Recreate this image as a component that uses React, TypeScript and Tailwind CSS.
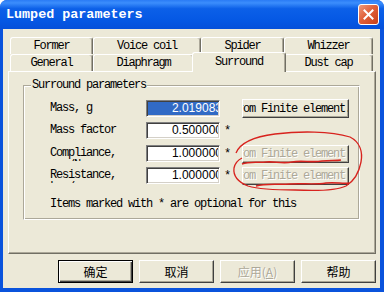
import React from "react";

const MONO = "[font-family:'Liberation_Mono',monospace] text-[12px] tracking-[-1.2px]";
const CJK = "[font-family:'Noto_Sans_CJK_SC','Liberation_Sans',sans-serif] text-[12px]";

function Tab({ label, w, selected }: { label: string; w: string; selected?: boolean }) {
  if (selected) {
    return (
      <div
        className={`${w} relative z-10 -mx-[2px] -mt-[2px] h-[20px] flex items-center justify-center pb-[2px] border-l border-t border-r border-l-white border-t-white border-r-[#716F64] rounded-t-[3px] shadow-[inset_-1px_0_#ACA899] bg-[#ECE9D8] ${MONO}`}
      >
        {label}
      </div>
    );
  }
  return (
    <div
      className={`${w} h-[17px] flex items-center justify-center border-l border-t border-r border-l-white border-t-white border-r-[#716F64] rounded-t-[3px] shadow-[inset_-1px_0_#ACA899] bg-[#ECE9D8] ${MONO}`}
    >
      {label}
    </div>
  );
}

function Row({
  label,
  value,
  selected,
  star,
  button,
  disabled,
  mb,
}: {
  label: string;
  value: string;
  selected?: boolean;
  star?: boolean;
  button?: boolean;
  disabled?: boolean;
  mb: string;
}) {
  return (
    <div className={`flex h-[17px] items-center ${mb}`}>
      <div className={`w-[96px] h-[16px] self-start overflow-hidden pt-[2px] leading-[12px] whitespace-pre ${MONO}`}>{label}</div>
      <div className="w-[74px] h-[17px] border border-t-[#808080] border-l-[#808080] border-r-white border-b-white shadow-[inset_1px_1px_#404040,inset_-1px_-1px_#D4D0C8] bg-white p-[1px]">
        <div
          className={`w-full h-full overflow-hidden flex justify-end items-center ${
            selected ? "bg-[#316AC5] text-white" : "text-black"
          }`}
        >
          <span className="[font-family:'Liberation_Sans',sans-serif] text-[12px] leading-[13px] whitespace-nowrap -mr-[4px]">
            {value}
          </span>
        </div>
      </div>
      <div className={`w-[22px] pl-[4px] leading-[12px] ${MONO}`}>{star ? "*" : ""}</div>
      {button && (
        <div
          className={`w-[107px] ${
            disabled ? "h-[18px]" : "h-[19px]"
          } flex items-center justify-start overflow-hidden whitespace-nowrap border border-t-white border-l-white border-r-[#404040] border-b-[#404040] shadow-[inset_-1px_-1px_#A8A595] bg-[#ECE9D8] ${MONO} ${
            disabled ? "text-[#ACA899] [text-shadow:1px_1px_0_#fff]" : "text-black"
          }`}
        >
          <span className="-ml-[12px]">From Finite element..</span>
        </div>
      )}
    </div>
  );
}

function DlgButton({ children, def, disabled }: { children: React.ReactNode; def?: boolean; disabled?: boolean }) {
  return (
    <div
      className={`w-[75px] h-[23px] flex items-center justify-center bg-[#ECE9D8] ${CJK} ${
        def
          ? "border border-black shadow-[inset_1px_1px_#fff,inset_-1px_-1px_#404040,inset_-2px_-2px_#A8A595]"
          : "border border-t-white border-l-white border-r-[#404040] border-b-[#404040] shadow-[inset_-1px_-1px_#A8A595]"
      } ${disabled ? "text-[#ACA899] [text-shadow:1px_1px_0_#fff]" : "text-black"}`}
    >
      {children}
    </div>
  );
}

export default function App() {
  return (
    <div className="relative w-[384px] h-[292px] bg-white">
      <div className="w-[384px] h-[292px] flex flex-col bg-[#0A53DC] rounded-t-[7px] overflow-hidden">
        {/* title bar */}
        <div className="h-[29px] flex items-center justify-between pl-[6px] pr-[5px] bg-[linear-gradient(180deg,#2A7BF5_0%,#3C8EFC_10%,#0C60E8_30%,#0558E4_70%,#0550DA_100%)]">
          <span className="[font-family:'Liberation_Mono',monospace] font-bold text-[13.4px] text-white leading-none mt-[1px]">
            Lumped parameters
          </span>
          <div className="w-[21px] h-[21px] rounded-[3px] border border-white bg-[linear-gradient(135deg,#EE9A7C_0%,#E0603A_45%,#C8401A_100%)] flex items-center justify-center">
            <svg width="11" height="11" viewBox="0 0 11 11">
              <path d="M1.5 1.5 L9.5 9.5 M9.5 1.5 L1.5 9.5" stroke="#fff" strokeWidth="2" strokeLinecap="square" />
            </svg>
          </div>
        </div>
        {/* body */}
        <div className="flex-1 ml-[3px] mr-[4px] mb-[4px] bg-[#ECE9D8] pt-[8px] pl-[5px] text-black">
          {/* tabs */}
          <div className="h-[34px] ml-[2px] flex flex-col">
            <div className="flex">
              <Tab label="Former" w="w-[83px]" />
              <Tab label="Voice coil" w="w-[108px]" />
              <Tab label="Spider" w="w-[83px]" />
              <Tab label="Whizzer" w="w-[89px]" />
            </div>
            <div className="flex items-start">
              <Tab label="General" w="w-[83px]" />
              <Tab label="Diaphragm" w="w-[101px]" />
              <Tab label="Surround" w="w-[94px]" selected />
              <Tab label="Dust cap" w="w-[89px]" />
            </div>
          </div>
          {/* panel */}
          <div className="relative z-0 w-[368px] h-[183px] border border-t-white border-l-white border-r-[#716F64] border-b-[#716F64] shadow-[inset_-1px_-1px_#ACA899] pt-[13px] pl-[14px]">
            <div className="relative w-[337px] h-[135px] border border-t-[#ACA899] border-l-[#ACA899] border-r-white border-b-white shadow-[inset_1px_1px_#fff,inset_-1px_-1px_#ACA899] pt-[14px] pl-[26px]">
              <span className={`absolute left-[7px] -top-[8px] px-[1px] bg-[#ECE9D8] leading-[14px] ${MONO}`}>
                Surround parameters
              </span>
              <Row label="Mass, g" value="2.019083" selected button mb="mb-[5px]" />
              <Row label="Mass factor" value="0.500000" star mb="mb-[6px]" />
              <Row label={"Compliance,\n mm/N"} value="1.000000" star button disabled mb="mb-[5px]" />
              <Row label={"Resistance,\nk  /s"} value="1.000000" star button disabled mb="mb-0" />
              <div className={`mt-[14px] leading-[12px] whitespace-nowrap ${MONO}`}>
                Items marked with * are optional for this
              </div>
            </div>
          </div>
          {/* buttons */}
          <div className="flex gap-[6px] mt-[6px] ml-[50px]">
            <DlgButton def>确定</DlgButton>
            <DlgButton>取消</DlgButton>
            <DlgButton disabled>
              应用(<span className="underline">A</span>)
            </DlgButton>
            <DlgButton>帮助</DlgButton>
          </div>
        </div>
      </div>
      {/* hand-drawn red annotation */}
      <svg className="absolute inset-0 pointer-events-none" width="384" height="292" viewBox="0 0 384 292">
        <path
          d="M236 153 C240 143 252 137 275 134 C300 131 330 131 350 137 C360 142 363 152 361 162 C359 173 354 181 346 186 C335 191 315 191 295 190 C275 190 258 189 248 186 C238 182 233 176 234 168 C235 163 238 160 242 158"
          fill="none"
          stroke="#D8231E"
          strokeWidth="1.3"
        />
        <path
          d="M242 164 C250 161 258 163 266 162 C274 161 282 164 292 162 C302 160 312 163 322 161 C330 160 336 161 341 160"
          fill="none"
          stroke="#D8231E"
          strokeWidth="1.6"
        />
        <path
          d="M256 186 C266 183 278 185 290 184 C302 183 314 185 326 183 C336 182 343 184 349 183"
          fill="none"
          stroke="#D8231E"
          strokeWidth="1.4"
        />
      </svg>
    </div>
  );
}
